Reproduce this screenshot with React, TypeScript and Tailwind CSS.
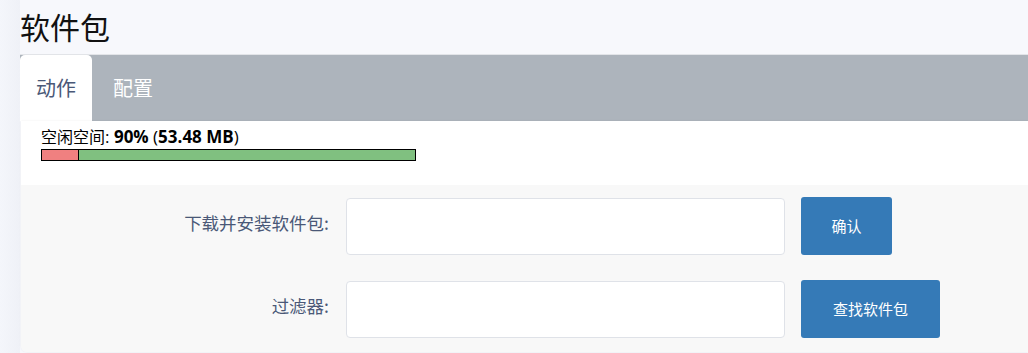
import React from "react";

const cjk = { fontFamily: '"Noto Sans CJK SC", "Noto Sans", sans-serif' };

function Row({ label, button, btnW }: { label: string; button: string; btnW: string }) {
  return (
    <div className="flex items-center h-[58px]">
      <div className="w-[308px] text-right text-[17.5px] leading-[24px] text-[#4a5877] pb-[7px]">{label}</div>
      <div className="ml-[17px] w-[439px] h-[57px] bg-white border border-[#dfe2e8] rounded-[4px]" />
      <button
        className={`ml-[16px] h-[58px] ${btnW} bg-[#357ab7] text-white text-[15px] rounded-[3px] flex items-center justify-center`}
      >
        {button}
      </button>
    </div>
  );
}

export default function App() {
  return (
    <div className="w-[1028px] h-[353px] overflow-hidden bg-[#f7f8fc] flex" style={cjk}>
      <div className="w-[20px] bg-gradient-to-r from-[#f4f6fb] to-[#eff1f7]" />
      <div className="flex-1 flex flex-col">
        <h1 className="h-[54px] text-[30px] leading-[52px] text-[#111] font-normal">软件包</h1>
        <div className="h-[67px] border-t border-[#e2e4e8] bg-[#adb4bc] flex items-stretch">
          <div className="bg-white rounded-t-[5px] w-[72px] flex items-center justify-center text-[20px] text-[#4a5877]">
            动作
          </div>
          <div className="pl-[21px] flex items-center text-[20px] text-white">配置</div>
        </div>
        <div className="h-[231px] ml-[1px] flex flex-col rounded-bl-[6px] overflow-hidden shadow-[0_0_2px_rgba(0,0,0,0.08)]">
          <div className="h-[64px] bg-white pl-[20px] pt-[5px]">
            <div className="text-[16px] leading-[20px] text-black" style={{ fontFamily: '"Open Sans", "Noto Sans CJK SC", sans-serif' }}>
              <span style={cjk}>空闲空间</span>
              <span className="text-[17px]">
                : <b className="font-bold">90%</b> (<b className="font-bold">53.48 MB</b>)
              </span>
            </div>
            <div className="mt-[2px] w-[375px] h-[12px] border border-black flex">
              <div className="w-[37px] bg-[#f08080] border-r border-black" />
              <div className="flex-1 bg-[#80c080]" />
            </div>
          </div>
          <div className="flex-1 bg-[#f8f8f8] pt-[12px] flex flex-col gap-[25px]">
            <Row label="下载并安装软件包:" button="确认" btnW="w-[91px]" />
            <Row label="过滤器:" button="查找软件包" btnW="w-[139px]" />
          </div>
        </div>
      </div>
    </div>
  );
}
